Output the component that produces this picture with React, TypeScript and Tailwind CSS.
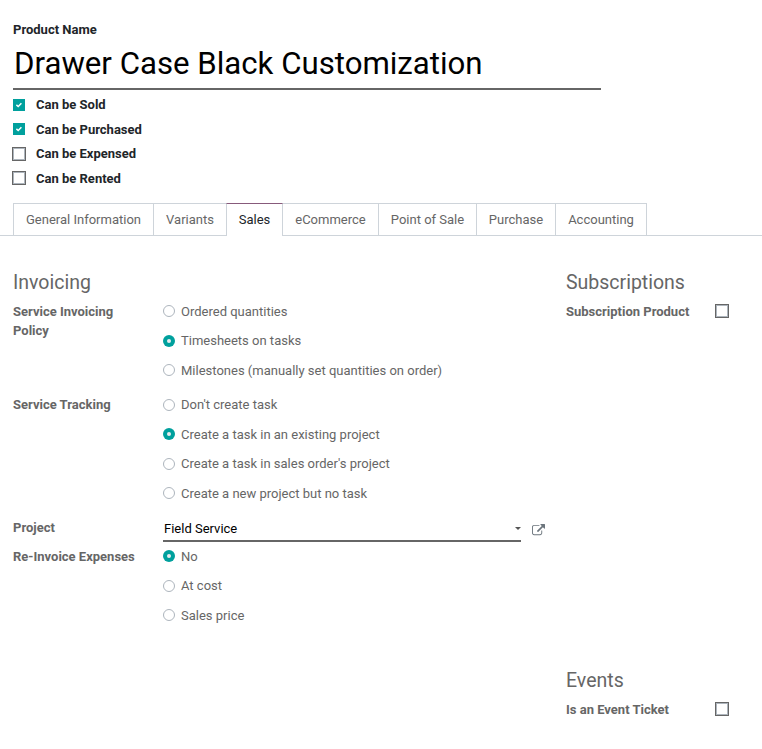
import React from "react";

function Box({ checked = false }: { checked?: boolean }) {
  return checked ? (
    <span className="m-px flex size-3 shrink-0 items-center justify-center bg-[#00a09d]">
      <svg viewBox="0 0 12 12" className="size-3" fill="none" stroke="#fff" strokeWidth="1.5">
        <path d="M3.4 5.9 5.2 7.5 8.4 4.3" />
      </svg>
    </span>
  ) : (
    <span className="block size-3.5 shrink-0 border border-[#666] bg-white shadow-[inset_0_0_0_1px_#adb5bd]" />
  );
}

function Option({ label, checked = false }: { label: string; checked?: boolean }) {
  return (
    <label className="flex h-[29.5px] items-start">
      <span
        className={
          checked
            ? "mt-[3.5px] flex size-3 shrink-0 items-center justify-center rounded-full bg-[#00a09d]"
            : "mt-[3.5px] size-3 shrink-0 rounded-full border border-[#adb5bd]"
        }
      >
        {checked && <span className="size-1 rounded-full bg-[#e9ecef]" />}
      </span>
      <span className="ml-1.5 whitespace-nowrap leading-[19.5px]">{label}</span>
    </label>
  );
}

function Group({ label, options, selected }: { label: string; options: string[]; selected: number }) {
  return (
    <div className="flex">
      <div className="w-[150px] shrink-0 pr-6 font-bold">{label}</div>
      <div>
        {options.map((o, i) => (
          <Option key={o} label={o} checked={i === selected} />
        ))}
      </div>
    </div>
  );
}

const flags: [string, boolean][] = [
  ["Can be Sold", true],
  ["Can be Purchased", true],
  ["Can be Expensed", false],
  ["Can be Rented", false],
];

const tabs: [string, string][] = [
  ["General Information", "w-[141px]"],
  ["Variants", "w-[74px]"],
  ["Sales", "w-[57px]"],
  ["eCommerce", "w-[97px]"],
  ["Point of Sale", "w-[99px]"],
  ["Purchase", "w-[80px]"],
  ["Accounting", "w-[92px]"],
];

export default function App() {
  return (
    <div className="h-[749px] w-[762px] overflow-hidden bg-white font-[Roboto,sans-serif] text-[13px] leading-[19.5px] text-[#666]">
      <header className="px-[13px] pt-5 text-[#212529]">
        <div className="h-5 font-bold">Product Name</div>
        <div className="h-[50px] w-[588px] border-b-2 border-[#666] pl-px text-[31.2px] leading-[48px] text-black">
          Drawer Case Black Customization
        </div>
        <div className="-ml-px pt-[5px]">
          {flags.map(([label, on]) => (
            <label key={label} className="flex h-[24.5px] items-start">
              <span className="mt-[2.75px]">
                <Box checked={on} />
              </span>
              <span className="ml-2.5 font-bold">{label}</span>
            </label>
          ))}
        </div>
      </header>
      <nav className="mt-[10px] flex h-[33px] border-b border-[#ced4da] pl-[13px]">
        {tabs.map(([name, width]) => (
          <div
            key={name}
            className={`${width} -mr-px flex shrink-0 justify-center border-x border-t border-[#ced4da] pt-[6px] whitespace-nowrap ${
              name === "Sales" ? "z-10 h-[33px] border-t-[#875a7b] bg-white text-[#212529]" : "h-8"
            }`}
          >
            {name}
          </div>
        ))}
      </nav>
      <main className="flex pl-[13px]">
        <section className="w-[553px] pt-[31.5px]">
          <h2 className="h-[34px] text-[19.5px] leading-[30px]">Invoicing</h2>
          <Group
            label="Service Invoicing Policy"
            options={["Ordered quantities", "Timesheets on tasks", "Milestones (manually set quantities on order)"]}
            selected={1}
          />
          <div className="h-[5px]" />
          <Group
            label="Service Tracking"
            options={[
              "Don't create task",
              "Create a task in an existing project",
              "Create a task in sales order's project",
              "Create a new project but no task",
            ]}
            selected={1}
          />
          <div className="flex h-[33.5px] items-start pt-[5px]">
            <div className="w-[150px] font-bold">Project</div>
            <div className="flex h-[24px] w-[358px] items-start justify-between border-b-2 border-[#666] pt-px pl-px text-black">
              Field Service
              <svg viewBox="0 0 6 3" className="mt-[8px] h-[3px] w-1.5" fill="#555">
                <path d="M0 0h6L3 3z" />
              </svg>
            </div>
            <svg viewBox="0 0 1792 1792" className="mt-[6px] ml-[11px] size-[13px]" fill="#6c757d">
              <path d="M1408 928v320q0 119-84.5 203.5t-203.5 84.5h-832q-119 0-203.5-84.5t-84.5-203.5v-832q0-119 84.5-203.5t203.5-84.5h704q14 0 23 9t9 23v64q0 14-9 23t-23 9h-704q-66 0-113 47t-47 113v832q0 66 47 113t113 47h832q66 0 113-47t47-113v-320q0-14 9-23t23-9h64q14 0 23 9t9 23zm384-864v512q0 26-19 45t-45 19-45-19l-176-176-652 652q-10 10-23 10t-23-10l-114-114q-10-10-10-23t10-23l652-652-176-176q-19-19-19-45t19-45 45-19h512q26 0 45 19t19 45z" />
            </svg>
          </div>
          <Group label="Re-Invoice Expenses" options={["No", "At cost", "Sales price"]} selected={0} />
        </section>
        <aside className="w-[180px] pt-[31.5px]">
          <h2 className="h-[34px] text-[19.5px] leading-[30px]">Subscriptions</h2>
          <div className="flex h-[364px]">
            <div className="w-[149px] font-bold">Subscription Product</div>
            <span className="mt-[2.5px]">
              <Box />
            </span>
          </div>
          <h2 className="h-[34px] text-[19.5px] leading-[30px]">Events</h2>
          <div className="flex">
            <div className="w-[149px] font-bold">Is an Event Ticket</div>
            <span className="mt-[2.5px]">
              <Box />
            </span>
          </div>
        </aside>
      </main>
    </div>
  );
}
